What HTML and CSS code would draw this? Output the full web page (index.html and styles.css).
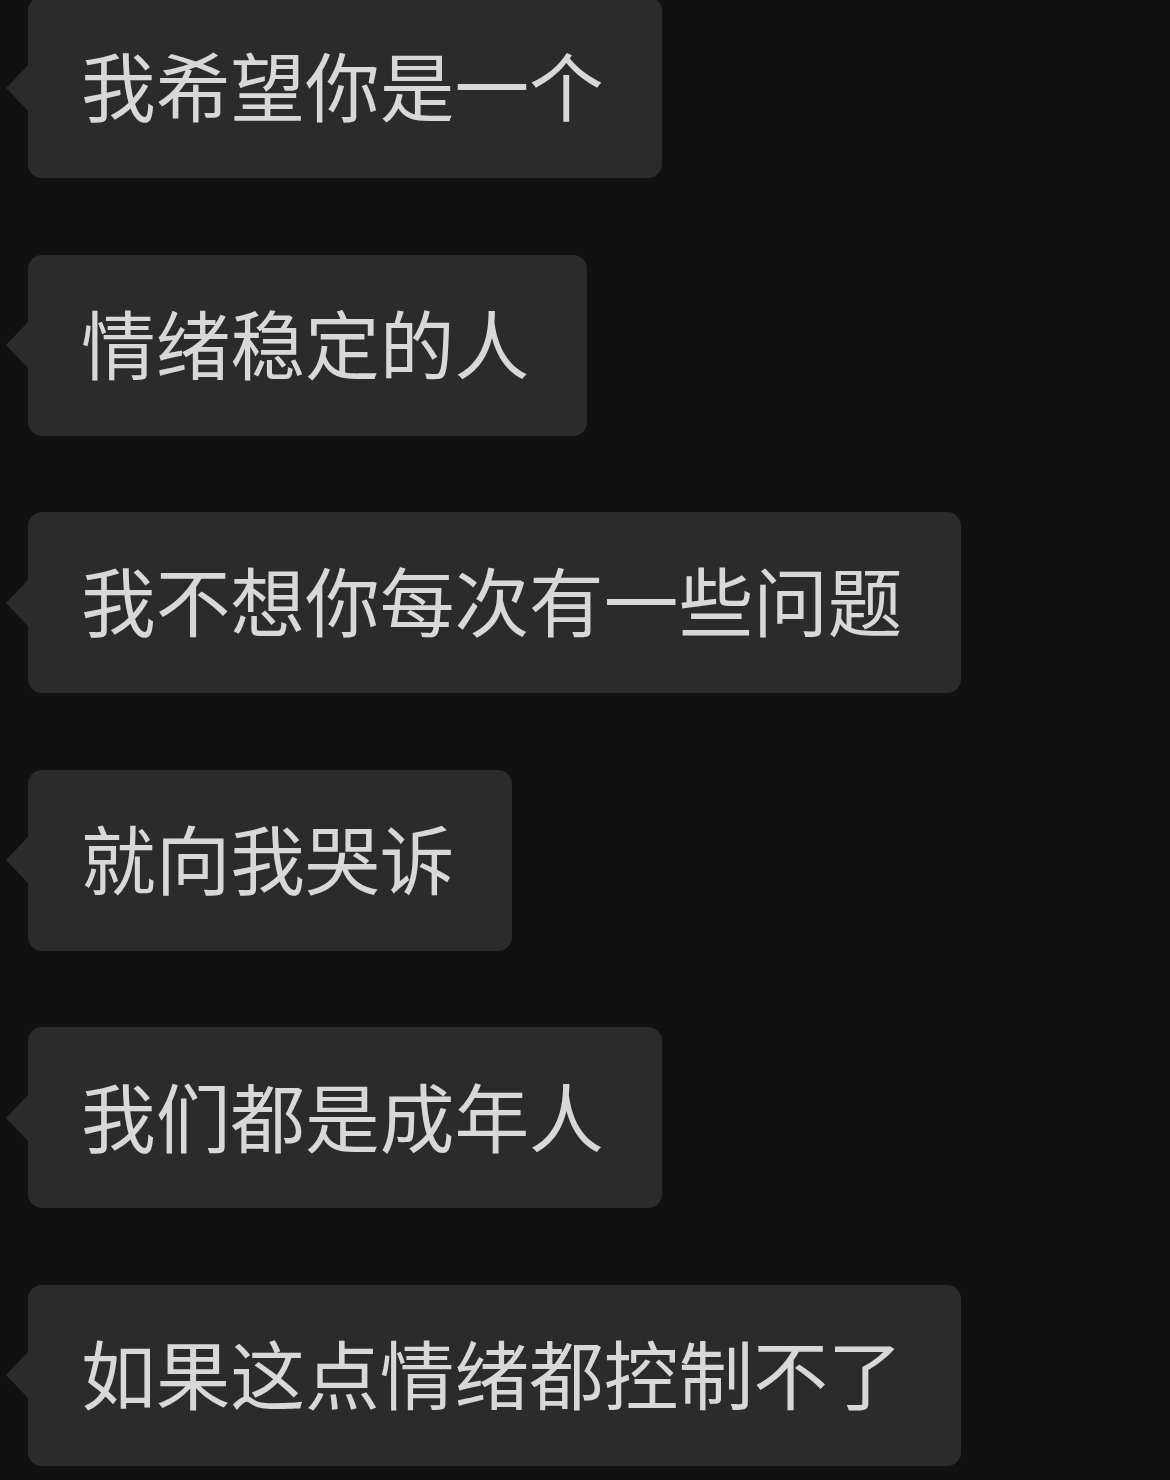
FILE: index.html
```html
<!DOCTYPE html>
<html lang="zh-CN">
<head>
    <meta charset="UTF-8">
    <meta name="viewport" content="width=device-width, initial-scale=1.0">
    <title>聊天记录</title>
    <link rel="stylesheet" href="styles.css">
</head>
<body>
    <!-- 对方发来的消息 -->
    <div class="chat">
        <div class="bubble">我希望你是一个</div>
        <div class="bubble">情绪稳定的人</div>
        <div class="bubble">我不想你每次有一些问题</div>
        <div class="bubble">就向我哭诉</div>
        <div class="bubble">我们都是成年人</div>
        <div class="bubble">如果这点情绪都控制不了</div>
    </div>
</body>
</html>
```

FILE: styles.css
```css
:root {
    --bg: #111111;
    --bubble: #2b2b2b;
    --text: #d8d8d8;
}

html, body {
    margin: 0;
    background: var(--bg);
}

body {
    font-family: 'Noto Sans CJK SC', 'Noto Sans', sans-serif;
    overflow: hidden;
}

.chat {
    display: flex;
    flex-direction: column;
    align-items: flex-start;
    gap: 76.6px;
    margin-top: -3px;
    padding-left: 28px;
}

.bubble {
    position: relative;
    box-sizing: border-box;
    height: 181px;
    display: flex;
    align-items: center;
    padding: 0 58px 6px 53px;
    background: var(--bubble);
    border-radius: 14px;
    color: var(--text);
    font-size: 74.7px;
    line-height: 1;
    white-space: nowrap;
}

/* 左侧小三角 */
.bubble::before {
    content: "";
    position: absolute;
    left: -22px;
    top: 50%;
    margin-top: -23px;
    border-top: 23px solid transparent;
    border-bottom: 23px solid transparent;
    border-right: 22px solid var(--bubble);
}
```
